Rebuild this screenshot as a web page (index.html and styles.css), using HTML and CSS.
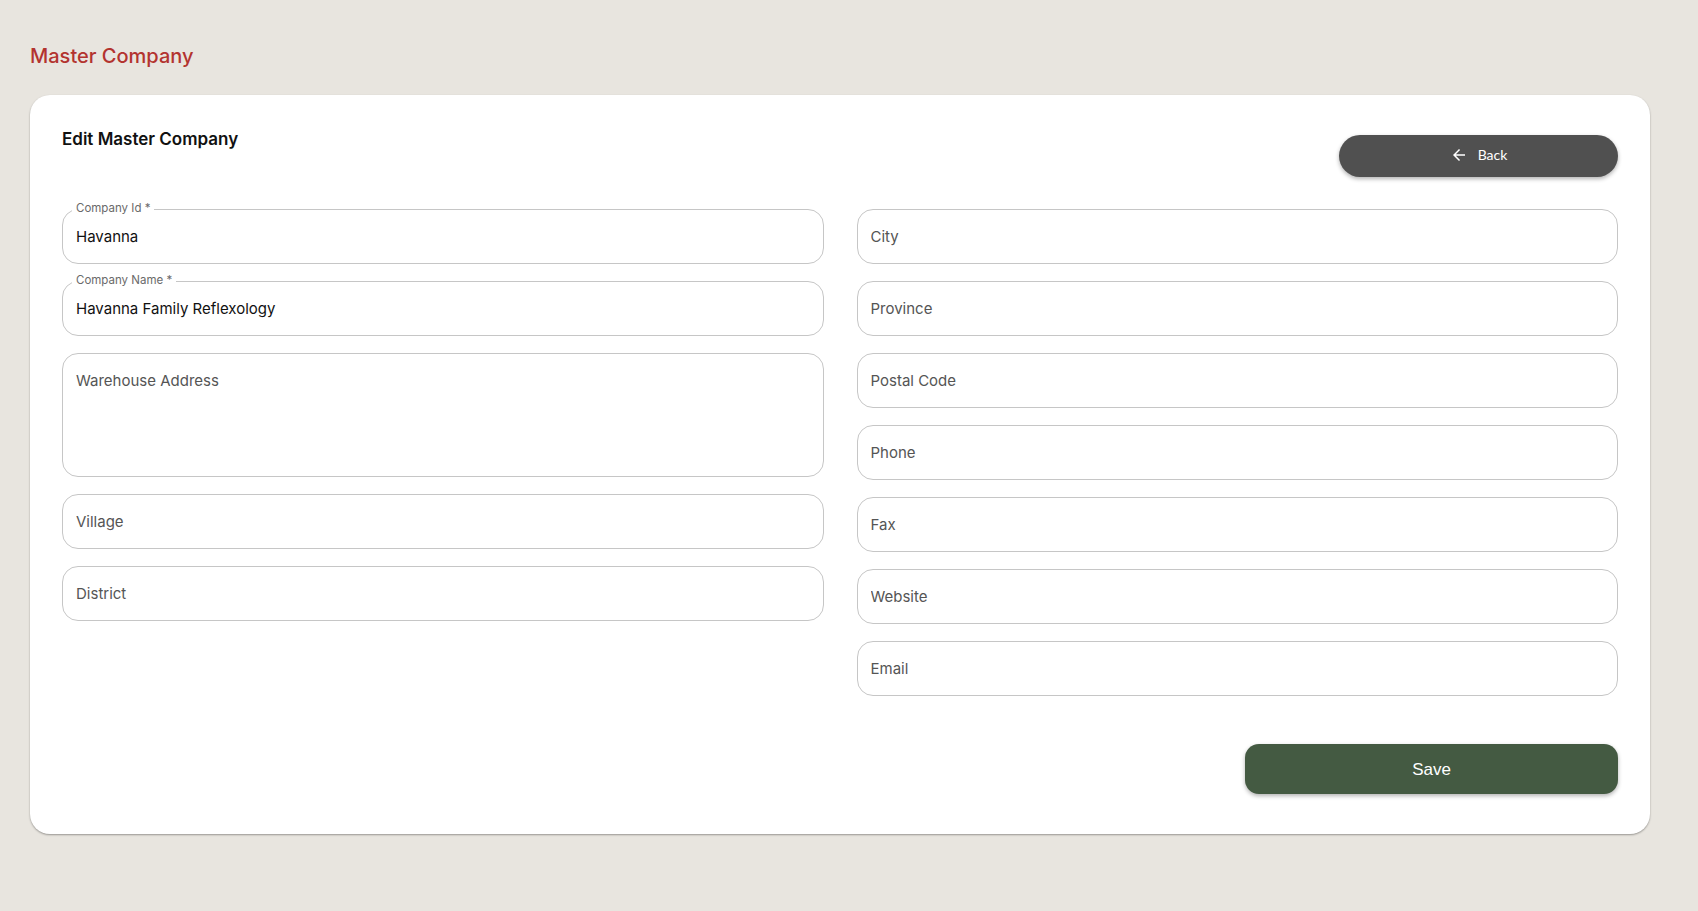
FILE: index.html
```html
<!DOCTYPE html>
<html lang="en">
<head>
    <meta charset="UTF-8">
    <meta name="viewport" content="width=device-width, initial-scale=1.0">
    <title>Edit Master Company</title>
    <link rel="stylesheet" href="styles.css">
</head>
<body>
    <h1 class="page-title">Master Company</h1>

    <main class="card">
        <div class="card-header">
            <h2 class="card-title">Edit Master Company</h2>
            <button class="btn-back" type="button">
                <svg viewBox="0 0 24 24" width="18" height="18"><path fill="currentColor" d="M20 11H7.83l5.59-5.59L12 4l-8 8 8 8 1.41-1.41L7.83 13H20v-2z"/></svg>
                <span>Back</span>
            </button>
        </div>

        <form class="form-grid">
            <div class="column">
                <div class="field">
                    <label class="field-label">Company Id *</label>
                    <input type="text" value="Havanna">
                </div>
                <div class="field">
                    <label class="field-label">Company Name *</label>
                    <input type="text" value="Havanna Family Reflexology">
                </div>
                <div class="field">
                    <textarea placeholder="Warehouse Address"></textarea>
                </div>
                <div class="field">
                    <input type="text" placeholder="Village">
                </div>
                <div class="field">
                    <input type="text" placeholder="District">
                </div>
            </div>
            <div class="column">
                <div class="field"><input type="text" placeholder="City"></div>
                <div class="field"><input type="text" placeholder="Province"></div>
                <div class="field"><input type="text" placeholder="Postal Code"></div>
                <div class="field"><input type="text" placeholder="Phone"></div>
                <div class="field"><input type="text" placeholder="Fax"></div>
                <div class="field"><input type="text" placeholder="Website"></div>
                <div class="field"><input type="text" placeholder="Email"></div>
            </div>
        </form>

        <div class="card-actions">
            <button class="btn-save" type="button">Save</button>
        </div>
    </main>
</body>
</html>
```

FILE: styles.css
```css
* {
    margin: 0;
    padding: 0;
    box-sizing: border-box;
}

body {
    font-family: Inter, 'Open Sans', sans-serif;
    background: #e8e5df;
    color: #111;
    padding: 40px 48px 40px 30px;
    min-height: 100vh;
}

.page-title {
    font-size: 20px;
    font-weight: 500;
    color: #b3332f;
    line-height: 30px;
    margin-top: 1px;
    margin-bottom: 24px;
}

/* Card */
.card {
    background: #fff;
    border-radius: 20px;
    box-shadow: 0 1px 2px rgba(0, 0, 0, 0.35);
    padding: 32px 32px 40px;
}

.card-header {
    display: flex;
    justify-content: space-between;
    align-items: flex-start;
    margin-bottom: 32px;
}

.card-title {
    font-size: 17px;
    font-weight: 600;
    line-height: 24px;
    color: #111;
}

.btn-back {
    margin-top: 8px;
    width: 279px;
    height: 42px;
    border: none;
    border-radius: 21px;
    background: #505050;
    color: #fff;
    font-family: Lato, sans-serif;
    font-size: 14px;
    display: flex;
    align-items: center;
    justify-content: center;
    gap: 10px;
    padding-bottom: 4px;
    box-shadow: 0 2px 4px rgba(0, 0, 0, 0.3);
    cursor: pointer;
}

.btn-back svg {
    margin-top: 2px;
}

/* Form */
.form-grid {
    display: grid;
    grid-template-columns: 1fr 1fr;
    column-gap: 33px;
}

.column {
    display: flex;
    flex-direction: column;
    gap: 17px;
}

.field {
    position: relative;
}

.field input,
.field textarea {
    display: block;
    width: 100%;
    height: 55px;
    border: 1px solid #c6c6c6;
    border-radius: 16px;
    padding: 0 13px;
    font-family: Inter, 'Open Sans', sans-serif;
    font-size: 15px;
    color: #111;
    background: #fff;
    outline: none;
}

.field textarea {
    height: 124px;
    padding: 17px 13px;
    resize: none;
    line-height: 20px;
}

.field input::placeholder,
.field textarea::placeholder {
    color: #555;
    opacity: 1;
}

.field-label {
    position: absolute;
    top: -8px;
    left: 10px;
    padding: 0 4px;
    background: #fff;
    font-size: 11.5px;
    line-height: 15px;
    color: #6a6a6a;
}

/* Actions */
.card-actions {
    display: flex;
    justify-content: flex-end;
    margin-top: 48px;
}

.btn-save {
    width: 373px;
    height: 50px;
    border: none;
    border-radius: 14px;
    background: #445a42;
    color: #fff;
    font-family: 'Liberation Sans', Arial, sans-serif;
    font-size: 17px;
    padding-top: 2px;
    box-shadow: 0 2px 4px rgba(0, 0, 0, 0.3);
    cursor: pointer;
}
```
